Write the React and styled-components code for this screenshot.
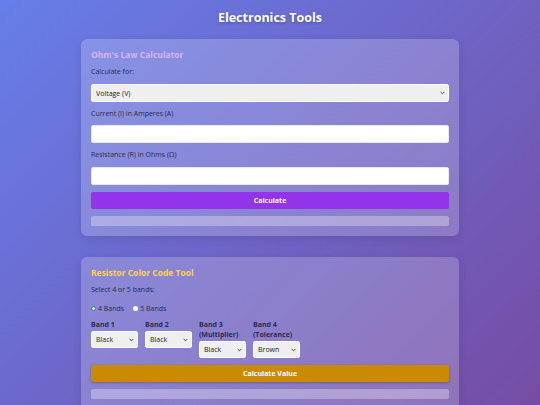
import React from "react";
import styled, { createGlobalStyle } from "styled-components";

const Global = createGlobalStyle`
  html, body { margin: 0; padding: 0; }
  body {
    font-family: "Open Sans", "Noto Sans", sans-serif;
    background: linear-gradient(135deg, #667eea 0%, #764ba2 100%);
    min-height: 405px;
  }
`;

const chevron =
  "url(\"data:image/svg+xml;utf8,<svg xmlns='http://www.w3.org/2000/svg' width='6' height='4' viewBox='0 0 6 4'><path d='M0.8 0.8 L3 3 L5.2 0.8' fill='none' stroke='%23333' stroke-width='1.1'/></svg>\")";

const Page = styled.div`
  width: 540px;
  min-height: 405px;
  display: flex;
  flex-direction: column;
  align-items: center;
  padding-top: 8px;
  box-sizing: border-box;
`;

const Title = styled.h1`
  margin: 0 0 12px;
  font-size: 12.5px;
  line-height: 19px;
  font-weight: 700;
  color: #fff;
  text-shadow: 0 1px 3px rgba(0, 0, 0, 0.25);
`;

const Card = styled.section`
  width: 378px;
  box-sizing: border-box;
  padding: 10px;
  margin-bottom: 21px;
  border-radius: 6px;
  background: rgba(255, 255, 255, 0.2);
  box-shadow: 0 3px 10px rgba(0, 0, 0, 0.1);
  display: flex;
  flex-direction: column;
`;

const CardTitle = styled.h2`
  margin: 0 0 6px;
  font-size: 8.5px;
  line-height: 12px;
  font-weight: 700;
  color: ${(p) => p.$color};
`;

const Label = styled.label`
  display: block;
  font-size: 7px;
  line-height: 10px;
  color: #2b2d4a;
  margin-bottom: ${(p) => p.$mb ?? 7}px;
`;

const Select = styled.select`
  display: block;
  appearance: none;
  -webkit-appearance: none;
  width: ${(p) => p.$w || "100%"};
  height: ${(p) => p.$h || 18}px;
  box-sizing: border-box;
  margin: 0 0 7px;
  padding: 0 4px;
  font-family: "Open Sans", sans-serif;
  font-size: 7px;
  color: #222;
  background: #efefef ${chevron} no-repeat right 3px center / 5px 4px;
  border: 1px solid #fff;
  border-radius: 2px;
  outline: none;
`;

const Input = styled.input`
  display: block;
  width: 100%;
  height: 18px;
  box-sizing: border-box;
  margin: 0 0 7px;
  border: 1px solid #e8e8ee;
  border-radius: 2px;
  background: #fff;
`;

const Button = styled.button`
  display: block;
  width: 100%;
  height: 17px;
  margin: 0 0 7px;
  border: none;
  border-radius: 2px;
  background: ${(p) => p.$bg};
  color: #fff;
  font-family: "Open Sans", sans-serif;
  font-size: 7px;
  font-weight: 700;
  box-shadow: ${(p) => (p.$shadow ? "0 1px 3px rgba(0,0,0,0.25)" : "none")};
`;

const Result = styled.div`
  height: 10px;
  border-radius: 2px;
  background: rgba(255, 255, 255, 0.3);
`;

const RadioRow = styled.div`
  display: flex;
  align-items: center;
  gap: 9px;
  margin-bottom: 7px;
  height: 10px;
`;

const RadioLabel = styled.label`
  display: flex;
  align-items: center;
  gap: 2px;
  font-size: 7px;
  color: #2b2d4a;
`;

const Dot = styled.span`
  width: 5px;
  height: 5px;
  border-radius: 50%;
  box-sizing: border-box;
  background: #fff;
  border: ${(p) => (p.$on ? "1.5px solid #1a73e8" : "none")};
  display: inline-block;
`;

const Bands = styled.div`
  display: flex;
  align-items: flex-start;
  gap: 7px;
`;

const Band = styled.div`
  width: 47px;
  display: flex;
  flex-direction: column;
`;

const BandLabel = styled.div`
  font-size: 7px;
  line-height: 10px;
  font-weight: 700;
  color: #2b2d4a;
  margin-bottom: 1px;
  white-space: nowrap;
`;

const colors = ["Black", "Brown", "Red", "Orange", "Yellow", "Green", "Blue", "Violet", "Grey", "White"];

export default function App() {
  const bands = [
    { l: ["Band 1"], v: "Black" },
    { l: ["Band 2"], v: "Black" },
    { l: ["Band 3", "(Multiplier)"], v: "Black" },
    { l: ["Band 4", "(Tolerance)"], v: "Brown" },
  ];
  return (
    <Page>
      <Global />
      <Title>Electronics Tools</Title>
      <Card>
        <CardTitle $color="#d8b4fe">Ohm's Law Calculator</CardTitle>
        <Label>Calculate for:</Label>
        <Select defaultValue="v">
          <option value="v">Voltage (V)</option>
          <option value="i">Current (I)</option>
          <option value="r">Resistance (R)</option>
        </Select>
        <Label $mb={6}>Current (I) in Amperes (A)</Label>
        <Input />
        <Label>Resistance (R) in Ohms (Ω)</Label>
        <Input />
        <Button $bg="#9333ea">Calculate</Button>
        <Result />
      </Card>
      <Card>
        <CardTitle $color="#fcd34d">Resistor Color Code Tool</CardTitle>
        <Label $mb={8}>Select 4 or 5 bands:</Label>
        <RadioRow>
          <RadioLabel><Dot $on />4 Bands</RadioLabel>
          <RadioLabel><Dot />5 Bands</RadioLabel>
        </RadioRow>
        <Bands>
          {bands.map((b, i) => (
            <Band key={i}>
              <BandLabel>
                {b.l.map((t, j) => (
                  <div key={j}>{t}</div>
                ))}
              </BandLabel>
              <Select $w="47px" $h={17} defaultValue={b.v}>
                {colors.map((c) => (
                  <option key={c}>{c}</option>
                ))}
              </Select>
            </Band>
          ))}
        </Bands>
        <Button $bg="#ca8a04" $shadow>Calculate Value</Button>
        <Result />
      </Card>
    </Page>
  );
}
